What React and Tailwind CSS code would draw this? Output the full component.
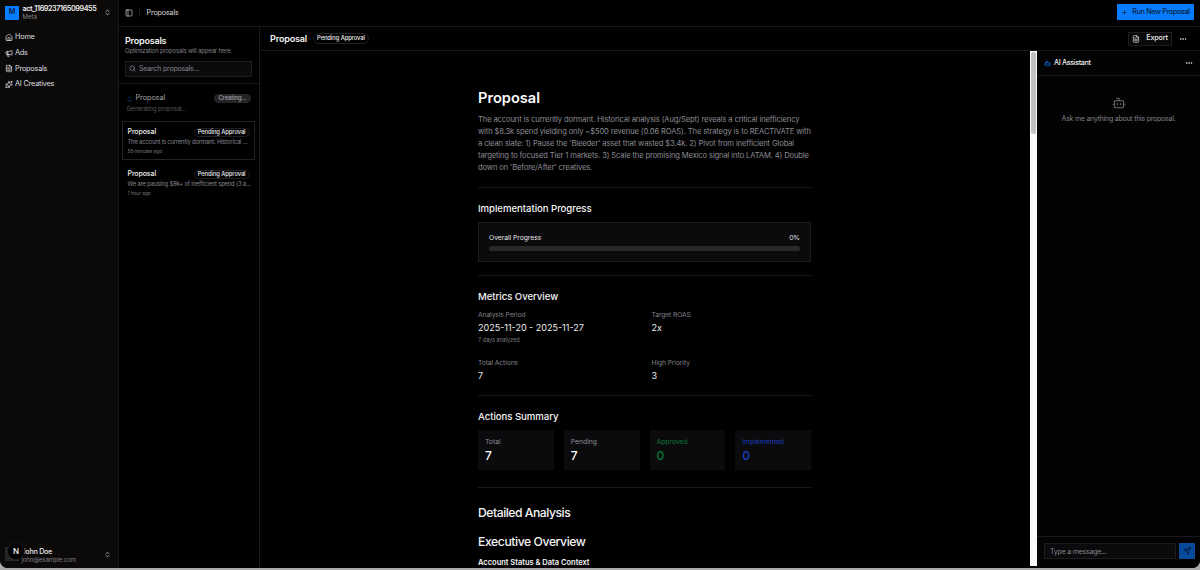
import React, { useState } from "react";
import {
  Bot,
  ChevronsUpDown,
  Ellipsis,
  FileText,
  House,
  LoaderCircle,
  Megaphone,
  PanelLeft,
  Plus,
  Search,
  Send,
  Sparkles,
} from "lucide-react";

const navItems = [
  { label: "Home", icon: House },
  { label: "Ads", icon: Megaphone },
  { label: "Proposals", icon: FileText },
  { label: "AI Creatives", icon: Sparkles },
];

const proposals = [
  {
    id: 1,
    summary: "The account is currently dormant. Historical ...",
    time: "55 minutes ago",
  },
  {
    id: 2,
    summary: "We are pausing $9k+ of inefficient spend (3 a...",
    time: "1 hour ago",
  },
];

const metrics = [
  { label: "Analysis Period", value: "2025-11-20 - 2025-11-27", note: "7 days analyzed" },
  { label: "Target ROAS", value: "2x" },
  { label: "Total Actions", value: "7" },
  { label: "High Priority", value: "3" },
];

const actions = [
  { label: "Total", value: 7, labelColor: "text-[#8b8b93]", valueColor: "text-[#fafafa]" },
  { label: "Pending", value: 7, labelColor: "text-[#8b8b93]", valueColor: "text-[#fafafa]" },
  { label: "Approved", value: 0, labelColor: "text-[#087a35]", valueColor: "text-[#087a35]" },
  { label: "Implemented", value: 0, labelColor: "text-[#1d3fc0]", valueColor: "text-[#1d3fc0]" },
];

const Sidebar = () => (
  <aside className="flex w-[118px] shrink-0 flex-col bg-[#0c0a09]">
    <div className="flex h-[25px] items-center pl-[5px] pr-[7px]">
      <div className="flex size-[14px] items-center justify-center bg-[#087cff] text-[7px] font-semibold text-[#06203f]">
        M
      </div>
      <div className="ml-[3.5px] flex-1 whitespace-nowrap pt-[1px]">
        <p className="text-[7.2px] font-semibold leading-[8px] tracking-[-0.4px] text-[#f0f0f0]">
          act_1169237165099455
        </p>
        <p className="text-[6px] leading-[8px] text-[#85858b]">Meta</p>
      </div>
      <ChevronsUpDown className="size-[7px] text-[#d4d4d8]" strokeWidth={2.5} />
    </div>
    <nav className="mt-[5px] flex flex-col">
      {navItems.map(({ label, icon: Icon }) => (
        <a
          key={label}
          href="#"
          className="flex h-[15.7px] items-center gap-[2.5px] pl-[4.5px] text-[7.3px] tracking-[-0.2px] text-[#dedee0]"
        >
          <Icon className="size-[8px] -translate-y-[0.5px]" strokeWidth={2.3} />
          {label}
        </a>
      ))}
    </nav>
    <div className="relative mt-auto mb-[4px] flex h-[20px] items-center pl-[5px] pr-[7px]">
      <div className="size-[14px] bg-[#27272a]" />
      <div className="ml-[2.5px] flex-1 whitespace-nowrap pt-[3px]">
        <p className="text-[7.2px] font-medium leading-[8px] tracking-[-0.28px] text-[#e4e4e7]">John Doe</p>
        <p className="text-[6.3px] leading-[8px] tracking-[-0.27px] text-[#7b7b80]">john@example.com</p>
      </div>
      <ChevronsUpDown className="size-[7px] text-[#d4d4d8]" strokeWidth={2.5} />
      {/* dev tools badge floating over the avatar */}
      <div className="absolute left-[7px] top-[-2px] flex size-[18px] items-center justify-center rounded-full border border-[#1c1c1c] bg-black text-[8px] font-medium text-white">
        N
      </div>
    </div>
  </aside>
);

const TopBar = () => (
  <header className="flex h-[27px] shrink-0 items-center border-b border-[#19191b] pl-[6px] pr-[6px]">
    <PanelLeft className="size-[8px] text-[#d4d4d8]" />
    <div className="ml-[5.5px] mr-[7px] h-[8px] w-px bg-[#1c1c1f]" />
    <span className="text-[7.2px] tracking-[-0.15px] text-[#d8d8da]">Proposals</span>
    <button className="ml-auto mb-[2px] flex h-[15.5px] w-[77px] items-center justify-center gap-[4px] whitespace-nowrap bg-[#087cff] text-[7.2px] font-medium tracking-[-0.33px] text-[#061c38]">
      <Plus className="size-[7px]" />
      Run New Proposal
    </button>
  </header>
);

const Badge = ({ children, className = "border-[#202023] text-[#ededee]" }) => (
  <span
    className={`flex h-[9px] items-center whitespace-nowrap rounded-full border px-[3px] text-[5.8px] font-medium tracking-[-0.08px] ${className}`}
  >
    {children}
  </span>
);

const ProposalList = () => {
  const [selected, setSelected] = useState(1);
  const [query, setQuery] = useState("");

  return (
    <section className="flex w-[141px] shrink-0 flex-col border-r border-[#19191b]">
      <div className="h-[57px] border-b border-[#19191b] px-[6px] pt-[8px]">
        <h2 className="text-[9px] font-semibold leading-[11px] tracking-[-0.2px] text-[#f4f4f5]">Proposals</h2>
        <p className="whitespace-nowrap pt-[1px] text-[6px] leading-[8px] tracking-[-0.17px] text-[#808087]">
          Optimization proposals will appear here.
        </p>
        <div className="mt-[6px] flex h-[15.5px] w-[127px] items-center gap-[3px] border border-[#1d1d20] bg-[#0b0b0d] pl-[3px]">
          <Search className="size-[7px] text-[#a1a1aa]" />
          <input
            value={query}
            onChange={(e) => setQuery(e.target.value)}
            placeholder="Search proposals..."
            className="w-[105px] text-[7px] tracking-[-0.18px] text-white outline-none placeholder:text-[#85858b]"
          />
        </div>
      </div>
      <div className="pl-[3px] pr-[4px] pt-[9px]">
        <div className="h-[28px] px-[4.5px]">
          <div className="flex h-[11px] items-center">
            <LoaderCircle className="size-[6px] text-[#0b4a9e]" />
            <span className="ml-[3px] text-[7.2px] text-[#a5a5a8]">Proposal</span>
            <Badge className="ml-auto border-transparent bg-[#242427] text-[#a5a5a8]">Creating...</Badge>
          </div>
          <p className="text-[6px] leading-[10px] tracking-[-0.13px] text-[#57575c]">Generating proposal...</p>
        </div>
        {proposals.map((p) => (
          <div
            key={p.id}
            onClick={() => setSelected(p.id)}
            className={`mb-[3px] h-[39px] border px-[4.5px] pt-[5px] ${
              selected === p.id ? "border-[#222225]" : "border-transparent"
            }`}
          >
            <div className="flex h-[10px] items-center justify-between">
              <span className="text-[7px] font-medium tracking-[-0.1px] text-[#f4f4f5]">Proposal</span>
              <Badge>Pending Approval</Badge>
            </div>
            <p className="whitespace-nowrap text-[5.9px] leading-[10px] tracking-[-0.19px] text-[#85858c]">
              {p.summary}
            </p>
            <p className="text-[5px] leading-[8px] tracking-[-0.13px] text-[#73737a]">{p.time}</p>
          </div>
        ))}
      </div>
    </section>
  );
};

const SectionTitle = ({ children }) => (
  <h2 className="text-[9.6px] font-medium leading-[14px] tracking-[-0.04px] text-[#f4f4f5]">{children}</h2>
);

const Divider = ({ className = "" }) => <div className={`h-px bg-[#19191b] ${className}`} />;

const ProposalReport = () => (
  <article className="ml-[218px] w-[333px] pt-[36.5px]">
    <h1 className="text-[14.6px] font-semibold leading-[20px] text-[#fafafa]">Proposal</h1>
    <p className="mt-[6px] whitespace-nowrap text-[7.6px] leading-[12.2px] tracking-[-0.13px] text-[#8b8b93]">
      The account is currently dormant. Historical analysis (Aug/Sept) reveals a critical inefficiency
      <br />
      with $8.3k spend yielding only ~$500 revenue (0.06 ROAS). The strategy is to REACTIVATE with
      <br />
      a clean slate: 1) Pause the 'Bleeder' asset that wasted $3.4k. 2) Pivot from inefficient Global
      <br />
      targeting to focused Tier 1 markets. 3) Scale the promising Mexico signal into LATAM. 4) Double
      <br />
      down on 'Before/After' creatives.
    </p>
    <Divider className="mt-[12.5px]" />

    <div className="pt-[14px]">
      <SectionTitle>Implementation Progress</SectionTitle>
      <div className="mt-[6px] h-[40px] border border-[#1c1c1f] bg-[#0b0b0d] px-[10px] pt-[10px]">
        <div className="flex justify-between text-[6.8px] leading-[10px] tracking-[-0.05px] text-[#e4e4e7]">
          <span>Overall Progress</span>
          <span>0%</span>
        </div>
        <div className="mt-[3px] h-[5px] rounded-full bg-[#29292b]" />
      </div>
    </div>
    <Divider className="mt-[13px]" />

    <div className="pt-[14px]">
      <SectionTitle>Metrics Overview</SectionTitle>
      <div className="mt-[6px] grid grid-cols-[173.5px_1fr] grid-rows-[47.5px_23.5px]">
        {metrics.map((m) => (
          <div key={m.label}>
            <p className="text-[6.7px] leading-[10px] tracking-[-0.08px] text-[#808087]">{m.label}</p>
            <p className="mt-[1px] text-[9px] leading-[14px] text-[#ededee]">{m.value}</p>
            {m.note && (
              <p className="mt-[1px] text-[5.6px] leading-[9px] tracking-[-0.08px] text-[#77777e]">{m.note}</p>
            )}
          </div>
        ))}
      </div>
    </div>
    <Divider className="mt-[14px]" />

    <div className="pt-[14px]">
      <SectionTitle>Actions Summary</SectionTitle>
      <div className="mt-[6px] grid grid-cols-4 gap-[10px]">
        {actions.map((a) => (
          <div key={a.label} className="h-[40px] bg-[#0b0b0d] px-[7px] pt-[7px]">
            <p className={`text-[6.8px] leading-[10px] ${a.labelColor}`}>{a.label}</p>
            <p className={`mt-[1px] text-[12px] font-medium leading-[16px] ${a.valueColor}`}>{a.value}</p>
          </div>
        ))}
      </div>
    </div>
    <Divider className="mt-[17px]" />

    <h2 className="mt-[16px] text-[12.2px] font-medium leading-[18px] tracking-[-0.48px] text-[#f4f4f5]">
      Detailed Analysis
    </h2>
    <h2 className="mt-[11px] text-[12.2px] font-medium leading-[18px] tracking-[-0.42px] text-[#f4f4f5]">
      Executive Overview
    </h2>
    <h3 className="mt-[6.5px] text-[7.5px] font-semibold leading-[10px] text-[#f4f4f5]">
      Account Status & Data Context
    </h3>
  </article>
);

const AssistantPanel = () => {
  const [message, setMessage] = useState("");

  return (
    <aside className="flex w-[163px] shrink-0 flex-col bg-[#030303]">
      <div className="flex h-[25px] items-center border-b border-[#19191b] pl-[7px] pr-[7px]">
        <Bot className="size-[7px] text-[#087cff]" />
        <span className="ml-[3px] text-[7.2px] font-medium tracking-[-0.35px] text-[#ededee]">AI Assistant</span>
        <Ellipsis className="ml-auto size-[8px] text-[#d4d4d8]" strokeWidth={2.5} />
      </div>
      <div className="flex flex-1 flex-col items-center pt-[20px]">
        <Bot className="size-[14px] text-[#6d6d72]" strokeWidth={1.8} />
        <p className="mt-[4px] text-[7px] leading-[10px] tracking-[-0.24px] text-[#808087]">
          Ask me anything about this proposal.
        </p>
      </div>
      <div className="flex h-[32px] gap-[3px] border-t border-[#19191b] px-[7px] pt-[6px]">
        <input
          value={message}
          onChange={(e) => setMessage(e.target.value)}
          placeholder="Type a message..."
          className="h-[16px] w-[132px] shrink-0 border border-[#1d1d20] bg-[#0b0b0d] px-[5px] text-[7px] tracking-[-0.22px] text-white outline-none placeholder:text-[#85858b]"
        />
        <button className="flex size-[16px] shrink-0 items-center justify-center bg-[#07499b] text-[#05101f]">
          <Send className="size-[8px]" />
        </button>
      </div>
    </aside>
  );
};

const App = () => {
  return (
    <div className="h-[570px] w-[1200px] overflow-hidden bg-[#aaa9a8] font-['Inter',sans-serif]">
      <div className="flex h-[568px] overflow-hidden rounded-b-[8px] bg-black">
        <Sidebar />
        <div className="flex min-w-0 flex-1 flex-col border-l border-[#19191b]">
          <TopBar />
          <div className="flex min-h-0 flex-1">
            <ProposalList />
            <main className="flex min-w-0 flex-1 flex-col">
              <div className="flex h-[24px] shrink-0 items-center border-b border-[#19191b] pl-[10px] pr-[13px]">
                <h1 className="text-[9px] font-semibold tracking-[-0.15px] text-[#f4f4f5]">Proposal</h1>
                <Badge className="ml-[6px] h-[11px] border-[#202023] px-[3.5px] text-[#ededee]">
                  Pending Approval
                </Badge>
                <button className="ml-auto flex h-[14px] w-[44px] items-center justify-center gap-[6px] border border-[#1d1d20] bg-[#09090b] text-[7.2px] font-medium tracking-[-0.15px] text-[#ededee]">
                  <FileText className="size-[8px]" />
                  Export
                </button>
                <Ellipsis className="ml-[7px] size-[8px] text-[#d4d4d8]" strokeWidth={2.5} />
              </div>
              <div className="flex min-h-0 flex-1">
                <div className="mb-[2px] flex min-w-0 flex-1 overflow-hidden">
                  <div className="min-w-0 flex-1">
                    <ProposalReport />
                  </div>
                  <div className="w-[7px] shrink-0 bg-[#fafafa] px-[1px] pt-[1px]">
                    <div className="h-[82px] rounded-full bg-[#c1c1c1]" />
                  </div>
                </div>
                <AssistantPanel />
              </div>
            </main>
          </div>
        </div>
      </div>
    </div>
  );
};

export default App;
